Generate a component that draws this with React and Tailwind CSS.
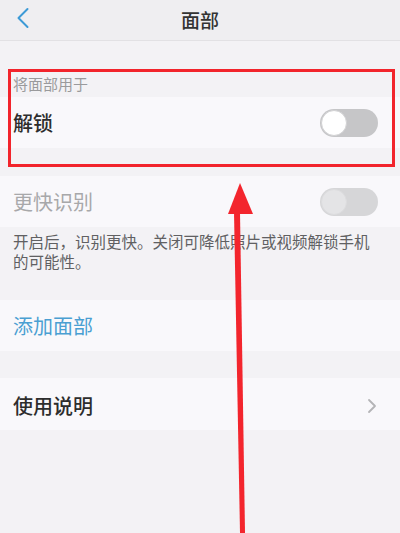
import React from 'react'

const font = { fontFamily: '"Noto Sans CJK SC", "Noto Sans", sans-serif' }

function Toggle({ faded = false }) {
  return (
    <div
      className={`w-[58px] h-[28px] rounded-full flex items-center p-[1px] ${faded ? 'bg-[#d6d6d8]' : 'bg-[#c6c6c8]'}`}
    >
      <div
        className={`w-[26px] h-[26px] rounded-full border ${faded ? 'bg-[#e4e4e6] border-[#dcdcde]' : 'bg-white border-[#d2d2d4]'}`}
      />
    </div>
  )
}

function Row({ children, right, className = '' }) {
  return (
    <div className={`flex items-center justify-between pl-[13px] pr-[22px] bg-[#f9f8fb] ${className}`}>
      {children}
      {right}
    </div>
  )
}

export default function App() {
  return (
    <div className="relative w-[400px] h-[533px] overflow-hidden bg-[#f3f2f5]" style={font}>
      {/* Header */}
      <div className="relative h-[41px] flex items-center justify-center bg-[#efeef1] border-b border-[#e2e1e4]">
        <svg className="absolute left-[15px] top-[7px]" width="16" height="22" viewBox="0 0 16 22">
          <path d="M12.5 2 L3.5 11 L12.5 20" fill="none" stroke="#3d9ad6" strokeWidth="2" strokeLinecap="round" strokeLinejoin="round" />
        </svg>
        <span className="text-[19px] text-[#333] font-medium">面部</span>
      </div>

      <div className="h-[30px]" />

      {/* Section title */}
      <div className="h-[26px] flex items-center pl-[13px] text-[15px] text-[#9a9a9c]">将面部用于</div>

      <Row className="h-[51px]" right={<Toggle />}>
        <span className="text-[20px] text-[#2d2d2d] font-medium">解锁</span>
      </Row>

      <div className="h-[28px]" />

      <Row className="h-[51px]" right={<Toggle faded />}>
        <span className="text-[20px] text-[#a8a8aa]">更快识别</span>
      </Row>

      {/* Description */}
      <div className="h-[73px] pt-[4px] pl-[13px] text-[15.5px] leading-[20px] text-[#606062]">
        开启后，识别更快。关闭可降低照片或视频解锁手机
        <br />
        的可能性。
      </div>

      <Row className="h-[51px]">
        <span className="text-[20px] text-[#4a9fd2]">添加面部</span>
      </Row>

      <div className="h-[27px]" />

      <Row
        className="h-[52px] pt-[4px]"
        right={
          <svg width="10" height="16" viewBox="0 0 10 16" className="mr-[1px]">
            <path d="M2 2 L8 8 L2 14" fill="none" stroke="#b4b4b6" strokeWidth="1.8" strokeLinecap="round" strokeLinejoin="round" />
          </svg>
        }
      >
        <span className="text-[20px] text-[#2d2d2d] font-medium">使用说明</span>
      </Row>

      {/* Annotation: red box */}
      <div className="absolute left-[8px] top-[69px] w-[387px] h-[98px] border-[3px] border-[#f2242c] pointer-events-none" />

      {/* Annotation: red arrow */}
      <svg className="absolute left-0 top-0 pointer-events-none" width="400" height="533" viewBox="0 0 400 533">
        <polygon points="234,212 240,212 245,533 240,533" fill="#f3252d" />
        <polygon points="240,183 228,214 253,214" fill="#f3252d" />
      </svg>
    </div>
  )
}
